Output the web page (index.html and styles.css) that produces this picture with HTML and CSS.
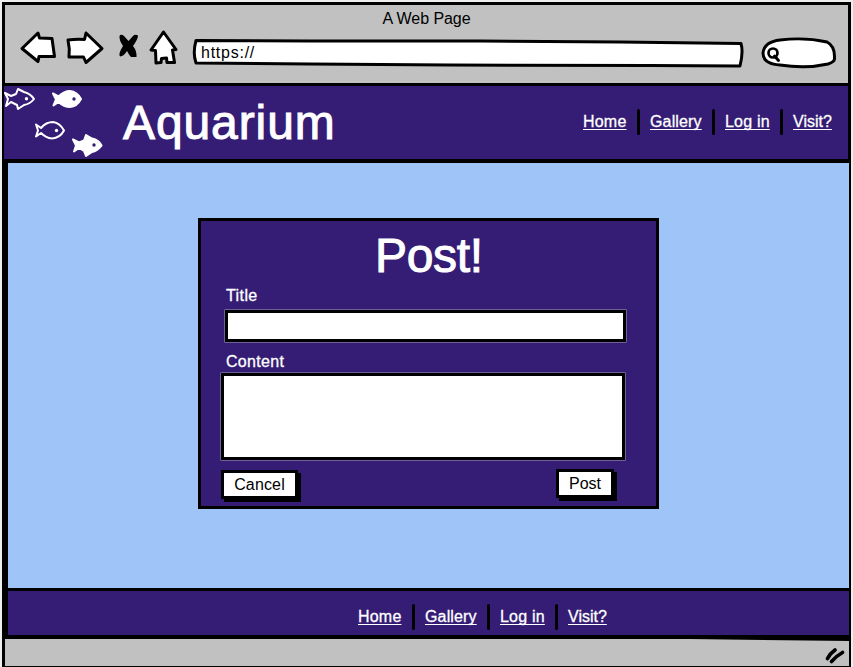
FILE: index.html
```html
<!DOCTYPE html>
<html lang="en">
<head>
<meta charset="utf-8">
<title>A Web Page</title>
<link rel="stylesheet" href="styles.css">
</head>
<body>
<div class="browser">
  <header class="chrome">
    <div class="window-title">A Web Page</div>
    <div class="toolbar">
      <svg class="tools" width="180" height="40" viewBox="0 30 180 40">
        <g fill="#fff" stroke="#000" stroke-width="3" stroke-linejoin="round">
          <path d="M22 48.500L38 33L39.500 38L52 38.500L54.500 56.500L39 56.500L38 61.500Z"/>
          <path d="M68 40Q76 39 84.500 39.500L86 33L102 48.500L86 62.500L83.500 57L69 57Q70 49 68 40Z"/>
          <path d="M163.500 32L176 49.500L172.500 50L174.500 62.500L167 62.500L166.500 58L161.500 58.500L161 62.500L156 63L155.500 50.500L151 50Z"/>
        </g>
        <path d="M119.500 36Q121 33.500 124 36L128.500 41L133 36Q135 34 138 35.500Q138 39 133 46Q137 51 136.500 57L131 57Q129 55 127 51Q124 56 120 56.500Q118 54 123 46Q119 40 119.500 36Z"/>
      </svg>
      <div class="address">
        <svg class="shape" width="552" height="30" viewBox="192 38 552 30"><path d="M196 40.500L310 41L480 41L620 42L741 43.500Q743.500 52 740 66L650 65.500L450 65L310 64L196 63Q192.500 53 196 40.500Z" fill="#fff" stroke="#000" stroke-width="3" stroke-linejoin="round"/></svg>
        <span class="url">https://</span>
      </div>
      <svg class="search" width="78" height="34" viewBox="760 36 78 34"><path d="M763 53Q764 42 780 40Q805 37 827 42Q835 46 834.500 58Q835 62 828 64Q806 69 780 65Q763 64 763 53Z" fill="#fff" stroke="#000" stroke-width="3"/><circle cx="773" cy="53" r="4.500" fill="#fff" stroke="#000" stroke-width="2.700"/><path d="M774.500 56L778.500 60.500" stroke="#000" stroke-width="3" stroke-linecap="round"/></svg>
    </div>
  </header>

  <div class="banner">
    <svg class="fishes" width="104" height="72" viewBox="4 86 104 72">
      <g fill="none" stroke="#fff" stroke-width="2" stroke-linejoin="round">
        <path d="M5 93L11 96L16 94L18 89L24 92Q31 94 34 99Q30 104 24 105L18 109L17 105L11 102L6 106L8 99Z"/>
        <path d="M36 124.500L41 128Q46 122 53 122Q60 123 64 130.500Q60 138 52 138.500Q46 138 41 133L36 136.500L38 130.500Z"/>
        <g fill="#fff">
          <path d="M53 93.500L58.500 96.500Q64 91 70 91Q77 91.500 81 99Q77 106.500 70 107Q64 107 58.500 102L53.500 105.500L56 99.500Z"/>
          <path d="M73 139.500L79 142.500L84 140.500L86 135L92 138.500Q99 140 101.500 145.500Q97 151 92 152L86 156L84 151L79 148L74 151.500L76 145.500Z"/>
        </g>
      </g>
      <circle cx="26.500" cy="98.700" r="1.700" fill="#fff"/><circle cx="56.500" cy="130.500" r="1.700" fill="#fff"/>
      <circle cx="74" cy="99" r="1.700" fill="#351d75"/><circle cx="94" cy="145" r="1.700" fill="#351d75"/>
    </svg>
    <h1 class="brand">Aquarium</h1>
    <nav class="links"><a class="home">Home</a><i></i><a class="gallery">Gallery</a><i></i><a class="login">Log in</a><i></i><a class="visit">Visit?</a></nav>
  </div>

  <main class="page">
    <section class="card">
      <h2 class="card-title">Post!</h2>
      <div class="label title-label">Title</div>
      <div class="field title-field"></div>
      <div class="label content-label">Content</div>
      <div class="field content-field"></div>
      <div class="actions"><div class="button cancel">Cancel</div><div class="button post">Post</div></div>
    </section>
  </main>

  <footer class="footer">
    <nav class="links"><a class="home">Home</a><i></i><a class="gallery">Gallery</a><i></i><a class="login">Log in</a><i></i><a class="visit">Visit?</a></nav>
  </footer>
  <div class="status"><svg width="848" height="31" viewBox="2 636 848 31"><path d="M400 637L850 637L850 641L690 639Z"/><path d="M827.500 658.500Q830 653.500 835 650M831.500 661.500Q837 655.500 842.500 652.500" fill="none" stroke="#000" stroke-width="3.700" stroke-linecap="round"/></svg></div>
</div>
</body>
</html>
```
FILE: styles.css
```css
* { box-sizing: border-box; }
body {
  margin: 0;
  height: 667px;
  overflow: hidden;
  background: #eee;
  font-family: "Liberation Sans", Arial, sans-serif;
  font-size: 16px;
  line-height: 20px;
  color: #000;
}
svg { display: block; }
h1, h2 { margin: 0; font-weight: normal; font-size: 48px; line-height: 60px; color: #fff; -webkit-text-stroke: 1px #fff; stroke-linejoin: round; }
.browser { width: 849px; height: 667px; margin-left: 2px; padding-top: 2px; display: flex; flex-direction: column; }
.chrome { height: 84px; border: 3px solid #000; background: #c1c1c1; }
.window-title { height: 25px; padding-top: 4px; text-align: center; letter-spacing: -0.05px; }
.toolbar { display: flex; margin-left: -5px; }
.tools { flex: none; }
.address { width: 552px; height: 30px; margin: 8px 16px 0 12px; display: grid; }
.address .shape, .url { grid-area: 1 / 1; }
.url { padding: 5px 0 0 9px; letter-spacing: 0.75px; z-index: 1; }
.search { margin-top: 6px; flex: none; }
.banner { height: 73px; border: solid #000; border-width: 0 3px 0 2px; background: #351d75; display: flex; }
.fishes { flex: none; }
.brand { flex: none; padding-top: 7px; margin-left: 15px; width: 240px; letter-spacing: 0.9px; }
.links { display: flex; color: #fff; -webkit-text-stroke: 0.3px #fff; }
.links a { text-decoration: underline; text-underline-offset: 2px; text-decoration-thickness: 1px; text-decoration-skip-ink: none; white-space: nowrap; }
.links i { width: 3px; height: 26px; margin: -3px 10px 0 11px; border-radius: 2px; background: #000; }
.home { width: 43px; letter-spacing: 0.2px; }
.gallery { width: 51px; letter-spacing: 0.15px; }
.login { width: 44px; letter-spacing: 0.2px; }
.visit { width: 39px; letter-spacing: 0; }
.banner .links { margin: 26px 0 0 220px; }
.page { height: 432px; border: solid #000; border-width: 4px 2px 3px 6px; background: #9fc4f7; display: flex; }
.card { width: 461px; height: 291px; margin: 55px 0 0 190px; border: 3px solid #000; background: #351d75; padding-left: 20px; }
.card-title { height: 65px; padding: 5px 0 0 154px; letter-spacing: -0.35px; }
.label { color: #fff; -webkit-text-stroke: 0.3px #fff; padding-left: 5px; height: 24px; letter-spacing: 0.3px; }
.title-label { letter-spacing: 0.4px; }
.field { background: #fff; border: 3px solid #000; box-shadow: 0 0 0 0.5px #a9a3b8; }
.title-field { width: 401px; height: 32px; margin-left: 4px; }
.content-label { margin-top: 10px; height: 21px; }
.content-field { width: 404px; height: 87px; }
.actions { display: flex; justify-content: space-between; width: 393px; margin-top: 10px; }
.button { height: 29px; border: 3px solid #000; background: #fff; text-align: center; padding-top: 1px; line-height: 22px; }
.cancel { width: 77px; margin-top: 0; box-shadow: 3px 3px 0 #000; letter-spacing: 0.15px; }
.post { width: 58px; margin-top: -1px; box-shadow: 3px 3px 0 #000; }
.footer { height: 48px; border: solid #000; border-width: 0 2px 4px 6px; background: #351d75; }
.footer .links { margin: 16px 0 0 350px; }
.status { height: 28px; border: solid #000; border-width: 0 2px 1px 3px; background: #c1c1c1; }
.status svg { margin: -3px 0 0 -3px; }
```
